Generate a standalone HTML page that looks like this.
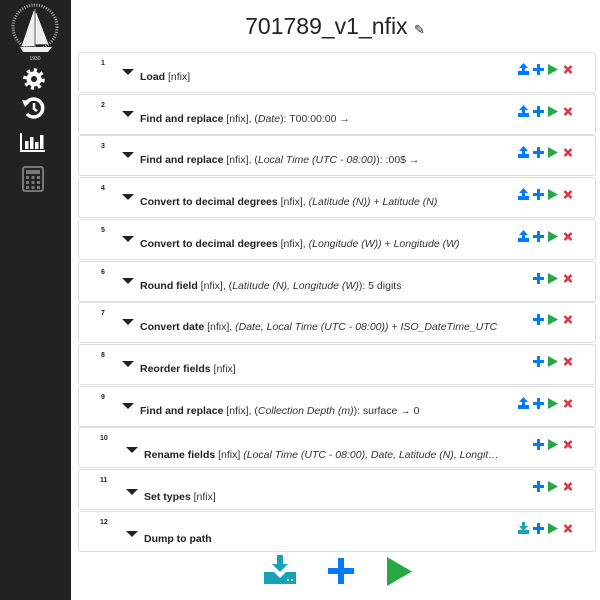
<!DOCTYPE html><html><head><style>
body{margin:0;width:600px;height:600px;background:#fff;font-family:"Liberation Sans",sans-serif;position:relative;overflow:hidden}
.sb{position:absolute;left:0;top:0;width:71px;height:600px;background:#222}
h1{position:absolute;left:0;width:670px;text-align:center;top:13px;margin:0;font-size:23px;font-weight:normal;color:#222}
.c{position:absolute;left:78px;width:516px;height:39px;border:1px solid #ddd;border-radius:3px;background:#fff}
.n{position:absolute;left:22px;top:7px;font-size:7px;font-weight:bold;color:#222}
.t{position:absolute;left:43px;top:16px;width:0;height:0;border-left:6px solid transparent;border-right:6px solid transparent;border-top:6px solid #222}
.x{position:absolute;left:61px;top:18px;font-size:10.5px;color:#333;white-space:nowrap}
.x b{color:#222}
.ic{position:absolute;top:10px;height:12px}
.s .n{left:21px}.s .t{left:47px;top:19px}.s .x{left:65px;top:21px}
</style></head><body>
<div class="sb">
<svg width="71" height="200" viewBox="0 0 71 200">
<circle cx="35" cy="27" r="22" fill="none" stroke="#aaa" stroke-width="3" stroke-dasharray="1 1.5"/>
<path d="M35 9 L35 48 M34 11 L22 46 L34 46 Z M36 13 L48 44 L36 44Z" fill="#eee" stroke="#fff" stroke-width=".6"/>
<path d="M20 47 L52 47 L48 52 L23 52Z" fill="#eee"/>
<text x="35" y="60" font-size="5" fill="#ccc" text-anchor="middle" font-family="Liberation Sans">1930</text>
<circle cx="34" cy="79" r="8.5" fill="none" stroke="#fff" stroke-width="4.5" stroke-dasharray="3 3.6"/>
<circle cx="34" cy="79" r="7.5" fill="#fff"/>
<circle cx="34" cy="79" r="3" fill="#222"/>
<path d="M27 114 A9 9 0 1 0 27 102" fill="none" stroke="#fff" stroke-width="3.5"/>
<path d="M22 100 L31 101 L25 107Z" fill="#fff"/>
<path d="M34 103 L34 109 L37 111" fill="none" stroke="#fff" stroke-width="2.5"/>
<path d="M21 133 L21 151 L45 151" fill="none" stroke="#fff" stroke-width="2"/>
<rect x="25" y="141" width="3.5" height="8" fill="#fff"/><rect x="30" y="137" width="3.5" height="12" fill="#fff"/><rect x="35" y="142" width="3.5" height="7" fill="#fff"/><rect x="40" y="135" width="3.5" height="14" fill="#fff"/>
<rect x="23" y="167" width="20" height="24" rx="2" fill="none" stroke="#777" stroke-width="2"/>
<rect x="26" y="170" width="14" height="4" fill="#777"/>
<g fill="#777"><rect x="26" y="176" width="3" height="3"/><rect x="31.5" y="176" width="3" height="3"/><rect x="37" y="176" width="3" height="3"/><rect x="26" y="181" width="3" height="3"/><rect x="31.5" y="181" width="3" height="3"/><rect x="37" y="181" width="3" height="3"/><rect x="26" y="186" width="3" height="3"/><rect x="31.5" y="186" width="3" height="3"/><rect x="37" y="186" width="3" height="3"/></g>
</svg></div>
<h1>701789_v1_nfix <span style="font-size:13px">&#9998;</span></h1>
<div id="cards"></div>
<svg style="position:absolute;left:264px;top:555px" width="32" height="30" viewBox="0 0 32 30"><path d="M13 0h6v9h5l-8 8-8-8h5z" fill="#17a2b8"/><path d="M0 17h10l6 6 6-6h10v12H0z" fill="#17a2b8"/><circle cx="24" cy="25" r="1" fill="#fff"/><circle cx="28" cy="25" r="1" fill="#fff"/></svg>
<svg style="position:absolute;left:328px;top:558px" width="26" height="26"><path d="M10 0h6v10h10v6H16v10h-6V16H0v-6h10z" fill="#007bff"/></svg>
<svg style="position:absolute;left:387px;top:557px" width="26" height="30"><path d="M0 0L25 14.5L0 29Z" fill="#28a745"/></svg>
<script>
var d=[["Load"," [nfix]",1],["Find and replace"," [nfix], (<i>Date</i>): T00:00:00 →",1],["Find and replace"," [nfix], (<i>Local Time (UTC - 08:00)</i>): :00$ →",1],["Convert to decimal degrees"," [nfix], <i>(Latitude (N)) + Latitude (N)</i>",1],["Convert to decimal degrees"," [nfix], <i>(Longitude (W)) + Longitude (W)</i>",1],["Round field"," [nfix], (<i>Latitude (N), Longitude (W)</i>): 5 digits",0],["Convert date"," [nfix], <i>(Date, Local Time (UTC - 08:00)) + ISO_DateTime_UTC</i>",0],["Reorder fields"," [nfix]",0],["Find and replace"," [nfix], (<i>Collection Depth (m)</i>): surface → 0",1],["Rename fields"," [nfix] <i>(Local Time (UTC - 08:00), Date, Latitude (N), Longit…</i>",0],["Set types"," [nfix]",0],["Dump to path","",2]];
var up='<svg class="ic" style="left:439px" width="11" height="12"><path d="M1 5L5.5 0 10 5H7v4H4V5z" fill="#007bff"/><rect x="0" y="8" width="11" height="4" fill="#007bff"/></svg>';
var dn='<svg class="ic" style="left:439px" width="11" height="12"><path d="M4 0h3v4h3L5.5 9 1 4h3z" fill="#17a2b8"/><rect x="0" y="8" width="11" height="4" fill="#17a2b8"/></svg>';
var rest='<svg class="ic" style="left:454px" width="11" height="12"><path d="M4 1h3v4h4v3H7v4H4V8H0V5h4z" fill="#007bff"/></svg><svg class="ic" style="left:469px" width="10" height="12"><path d="M0 1L10 6.5 0 12z" fill="#28a745"/></svg><svg class="ic" style="left:484px" width="10" height="12"><path d="M1.5 3L8.5 10M8.5 3L1.5 10" stroke="#dc3545" stroke-width="2.6"/></svg>';
var h='';d.forEach(function(r,i){h+='<div class="c'+(i>=9?' s':'')+'" style="top:'+(52+i*41.7).toFixed(1)+'px"><div class="n">'+(i+1)+'</div><div class="t"></div><div class="x"><b>'+r[0]+'</b>'+r[1]+'</div>'+(r[2]==1?up:r[2]==2?dn:'')+rest+'</div>';});
document.getElementById('cards').innerHTML=h;
</script>
</body></html>
